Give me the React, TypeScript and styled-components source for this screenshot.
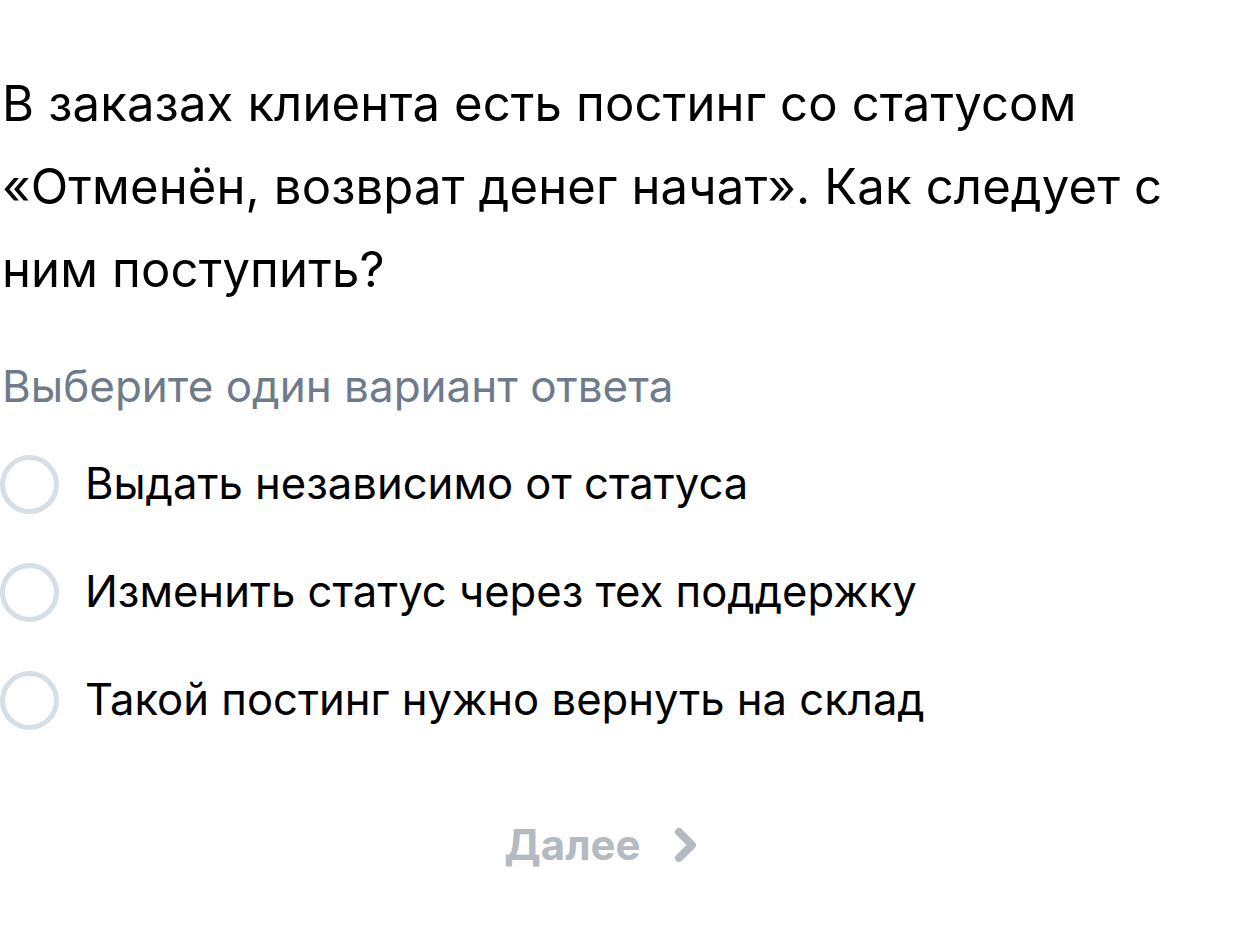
import React from "react"
import styled, { createGlobalStyle } from "styled-components"

const GlobalStyle = createGlobalStyle`
  html, body {
    margin: 0;
    padding: 0;
    background: #ffffff;
  }
  body {
    font-family: Inter, "Noto Sans", sans-serif;
    color: #000000;
    -webkit-font-smoothing: antialiased;
  }
`

const Page = styled.main`
  width: 1245px;
  height: 934px;
  overflow: hidden;
  padding: 62px 0 0 2px;
  box-sizing: border-box;
`

const Question = styled.h1`
  margin: 0;
  font-size: 49px;
  font-weight: 400;
  line-height: 83px;
  letter-spacing: 0.15px;
  max-width: 1200px;
`

const Hint = styled.p`
  margin: 47px 0 0;
  font-size: 44px;
  line-height: 56px;
  color: #6d7b8b;
`

const Options = styled.ul`
  list-style: none;
  margin: 40px 0 0 -2px;
  padding: 0;
  display: flex;
  flex-direction: column;
  gap: 48px;
`

const Option = styled.li`
  display: flex;
  align-items: center;
  gap: 26px;
  height: 60px;
`

const Radio = styled.span`
  flex: none;
  width: 59px;
  height: 59px;
  border-radius: 50%;
  border: 5px solid #d6dee6;
  box-sizing: border-box;
`

const OptionText = styled.span`
  font-size: 43.6px;
  line-height: 60px;
`

const Footer = styled.div`
  display: flex;
  justify-content: center;
  align-items: center;
  margin-top: 89px;
  padding-right: 44px;
`

const NextButton = styled.button`
  display: flex;
  align-items: center;
  gap: 32px;
  border: 0;
  background: none;
  padding: 0;
  font-family: Inter, "Noto Sans", sans-serif;
  font-size: 42px;
  font-weight: 700;
  color: #b3bac2;
  cursor: default;
`

const options = [
  "Выдать независимо от статуса",
  "Изменить статус через тех поддержку",
  "Такой постинг нужно вернуть на склад",
]

export default function App() {
  return (
    <>
      <GlobalStyle />
      <Page>
        <Question>
          В заказах клиента есть постинг со статусом «Отменён, возврат денег
          начат». Как следует с ним поступить?
        </Question>
        <Hint>Выберите один вариант ответа</Hint>
        <Options>
          {options.map((o) => (
            <Option key={o}>
              <Radio />
              <OptionText>{o}</OptionText>
            </Option>
          ))}
        </Options>
        <Footer>
          <NextButton disabled>
            Далее
            <svg width="26" height="38" viewBox="0 0 26 38" fill="none">
              <path
                d="M6 6 L19 19 L6 32"
                stroke="#b3bac2"
                strokeWidth="8"
                strokeLinecap="round"
                strokeLinejoin="round"
              />
            </svg>
          </NextButton>
        </Footer>
      </Page>
    </>
  )
}
